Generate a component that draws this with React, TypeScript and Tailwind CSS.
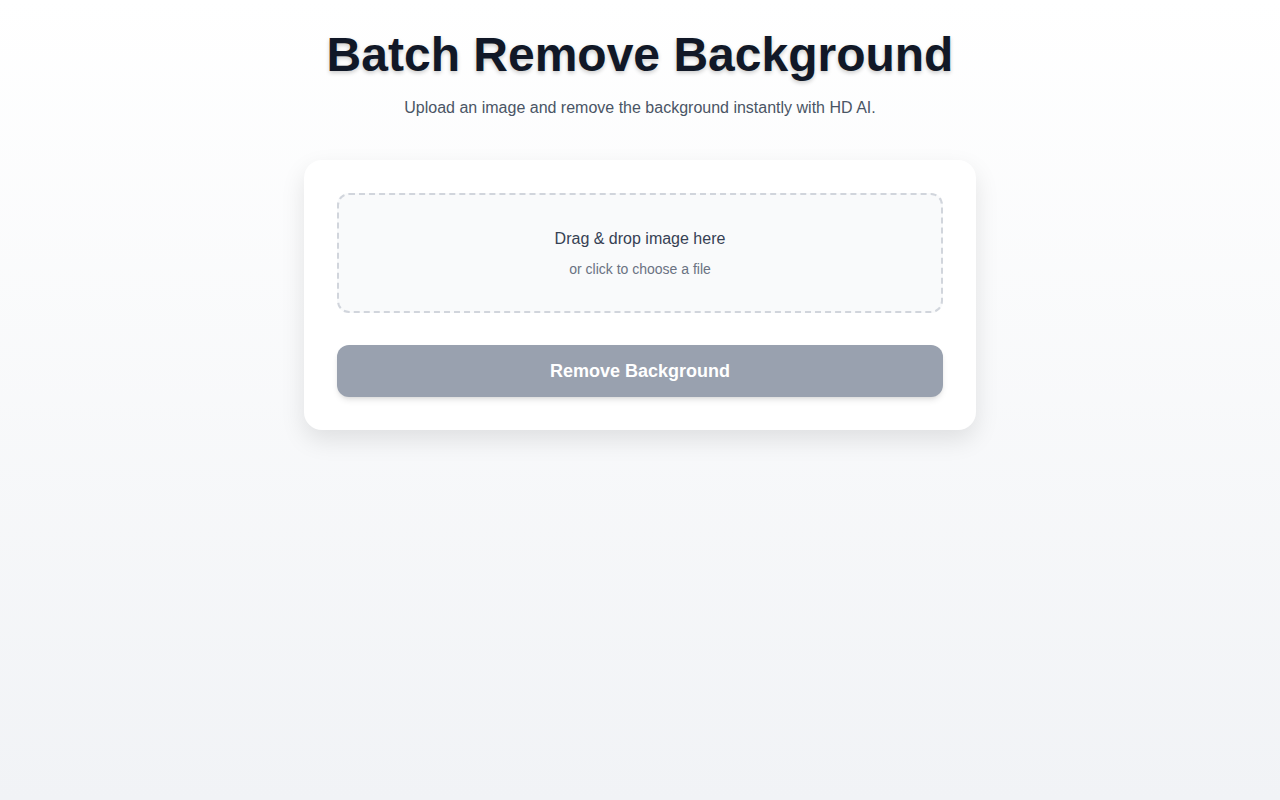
import React from 'react';

const App: React.FC = () => {
  return (
    <div
      className="min-h-screen w-full bg-gradient-to-b from-white to-[#f1f3f6] flex flex-col items-center pt-[26px]"
      style={{ fontFamily: '"Liberation Sans", Arial, sans-serif' }}
    >
      <h1 className="text-5xl leading-[58px] font-bold text-[#111827] [text-shadow:0_2px_4px_rgba(0,0,0,0.2)]">
        Batch Remove Background
      </h1>
      <p className="mt-3 text-base text-gray-600">
        Upload an image and remove the background instantly with HD AI.
      </p>

      <div className="mt-10 w-[672px] bg-white rounded-[18px] shadow-[0_10px_25px_rgba(0,0,0,0.1)] p-[33px] flex flex-col gap-8">
        <div className="h-[120px] rounded-xl border-2 border-dashed border-gray-300 bg-gray-50 flex flex-col items-center justify-center cursor-pointer">
          <p className="text-base text-gray-700">Drag &amp; drop image here</p>
          <p className="mt-2 text-sm text-gray-500">or click to choose a file</p>
        </div>
        <button
          disabled
          className="h-[52px] w-full rounded-xl bg-gray-400 text-white text-lg font-bold shadow-md"
        >
          Remove Background
        </button>
      </div>
    </div>
  );
};

export default App;
